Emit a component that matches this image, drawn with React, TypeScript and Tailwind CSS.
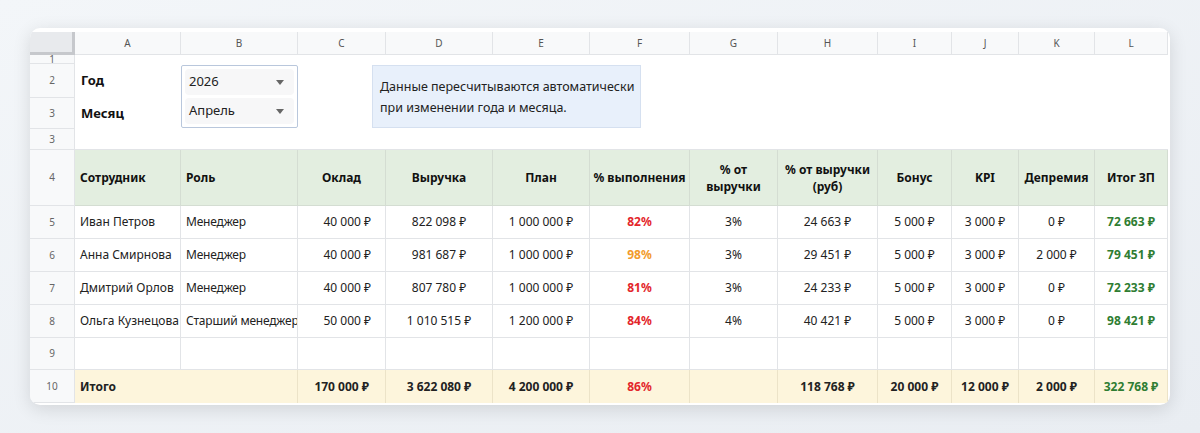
const cols = ["A", "B", "C", "D", "E", "F", "G", "H", "I", "J", "K", "L"];

const heads = [
  "Сотрудник",
  "Роль",
  "Оклад",
  "Выручка",
  "План",
  "% выполнения",
  "% от\nвыручки",
  "% от выручки\n(руб)",
  "Бонус",
  "KPI",
  "Депремия",
  "Итог ЗП",
];

const rows = [
  ["Иван Петров", "Менеджер", "40 000 ₽", "822 098 ₽", "1 000 000 ₽", "82%", "3%", "24 663 ₽", "5 000 ₽", "3 000 ₽", "0 ₽", "72 663 ₽"],
  ["Анна Смирнова", "Менеджер", "40 000 ₽", "981 687 ₽", "1 000 000 ₽", "98%", "3%", "29 451 ₽", "5 000 ₽", "3 000 ₽", "2 000 ₽", "79 451 ₽"],
  ["Дмитрий Орлов", "Менеджер", "40 000 ₽", "807 780 ₽", "1 000 000 ₽", "81%", "3%", "24 233 ₽", "5 000 ₽", "3 000 ₽", "0 ₽", "72 233 ₽"],
  ["Ольга Кузнецова", "Старший менеджер", "50 000 ₽", "1 010 515 ₽", "1 200 000 ₽", "84%", "4%", "40 421 ₽", "5 000 ₽", "3 000 ₽", "0 ₽", "98 421 ₽"],
];

const total = ["Итого", "", "170 000 ₽", "3 622 080 ₽", "4 200 000 ₽", "86%", "", "118 768 ₽", "20 000 ₽", "12 000 ₽", "2 000 ₽", "322 768 ₽"];

const gridCols =
  "grid-cols-[45px_106px_117px_88px_107px_97px_100px_88px_100px_74px_67px_76px_73px]";

function cellColor(i: number, v: string) {
  if (i === 5) return v === "98%" ? "text-[#f29b2c]" : "text-[#e3262b]";
  if (i === 11) return "text-[#2f7d32]";
  return "text-[#222]";
}

function align(i: number) {
  if (i < 2) return "justify-start pl-[5px]";
  if (i === 2) return "justify-end pr-[14px]";
  return "justify-center";
}

const RowNum = ({ n, h }: { n: string; h: string }) => (
  <div
    className={`${h} flex items-center justify-center bg-[#f8f9fa] border-r border-b border-[#e2e4e7] text-[10px] text-[#666] font-['Liberation_Sans',sans-serif]`}
  >
    {n}
  </div>
);

const Caret = () => (
  <svg width="8" height="5" viewBox="0 0 8 5" className="ml-auto mr-[10px]">
    <path d="M0 0h8L4 5z" fill="#666" />
  </svg>
);

export default function App() {
  return (
    <div className="w-[1200px] h-[433px] bg-gradient-to-br from-[#f3f6f9] to-[#e9edf2] pt-[28px] pl-[30px] font-['Open_Sans',sans-serif]">
      <div className="w-[1140px] h-[377px] bg-white rounded-[10px] shadow-[0_4px_18px_rgba(0,0,0,0.12)] overflow-hidden pt-[4px]">
        <div className={`grid ${gridCols}`}>
          {/* column letters */}
          <div className="h-[23px] bg-[#e8eaed] border-r-[3px] border-b-[3px] border-[#c6c8cc]" />
          {cols.map((c) => (
            <div
              key={c}
              className="h-[23px] flex items-center justify-center bg-[#f8f9fa] border-r border-b border-[#e2e4e7] text-[10px] text-[#555] font-['Liberation_Sans',sans-serif]"
            >
              {c}
            </div>
          ))}

          {/* top parameters area */}
          <div className="flex flex-col">
            <RowNum n="1" h="h-[9px] text-[7px]" />
            <RowNum n="2" h="h-[34px]" />
            <RowNum n="3" h="h-[31px]" />
            <RowNum n="3" h="h-[21px]" />
          </div>
          <div className="col-span-12 h-[95px] flex pt-[9px] border-b border-[#e2e4e7]">
            <div className="w-[106px] flex flex-col text-[13px] font-bold text-[#111] pl-[6px]">
              <div className="h-[34px] flex items-center">Год</div>
              <div className="h-[31px] flex items-center">Месяц</div>
            </div>
            <div className="w-[117px] h-[63px] mt-[1px] border border-[#b9c7dc] rounded-[2px] p-[3px] flex flex-col gap-[3px]">
              <div className="h-[27px] bg-[#f7f7f8] rounded-[4px] flex items-center pl-[4px] text-[13px] text-[#222]">
                2026
                <Caret />
              </div>
              <div className="h-[27px] bg-[#f7f7f8] rounded-[4px] flex items-center pl-[4px] text-[13px] text-[#222]">
                Апрель
                <Caret />
              </div>
            </div>
            <div className="ml-[74px] mt-[1px] w-[269px] h-[63px] bg-[#e8f0fb] border border-[#d5e0f0] flex flex-col justify-center pl-[7px] text-[12.5px] leading-[21px] text-[#222]">
              <div>Данные пересчитываются автоматически</div>
              <div>при изменении года и месяца.</div>
            </div>
          </div>

          {/* header row */}
          <RowNum n="4" h="h-[56px]" />
          {heads.map((h, i) => (
            <div
              key={h}
              className={`h-[56px] flex items-center ${i < 2 ? "justify-start pl-[5px]" : "justify-center"} bg-[#e3eee0] border-r border-b border-[#d4ddd2] text-[12px] font-bold text-[#111] whitespace-pre-line text-center leading-[17px]`}
            >
              {h}
            </div>
          ))}

          {/* data rows */}
          {rows.map((r, ri) => (
            <div key={ri} className="contents">
              <RowNum n={String(ri + 5)} h="h-[33px]" />
              {r.map((v, i) => (
                <div
                  key={i}
                  className={`h-[33px] flex items-center ${align(i)} border-r border-b border-[#e2e4e7] text-[12px] ${i === 1 ? "text-[11.5px] tracking-[-0.2px]" : ""} whitespace-nowrap overflow-hidden ${i === 5 || i === 11 ? "font-bold" : ""} ${cellColor(i, v)}`}
                >
                  {v}
                </div>
              ))}
            </div>
          ))}

          {/* empty row */}
          <RowNum n="9" h="h-[32px]" />
          {cols.map((c) => (
            <div key={c} className="h-[32px] border-r border-b border-[#e2e4e7]" />
          ))}

          {/* total row */}
          <RowNum n="10" h="h-[33px]" />
          {total.map((v, i) => (
            <div
              key={i}
              className={`h-[33px] flex items-center ${align(i)} ${i === 2 ? "!pr-[16px]" : ""} bg-[#fdf5dc] ${i === 0 ? "" : "border-r"} border-[#ece3c8] text-[12px] font-bold whitespace-nowrap ${cellColor(i, v)}`}
            >
              {v}
            </div>
          ))}
        </div>
      </div>
    </div>
  );
}
